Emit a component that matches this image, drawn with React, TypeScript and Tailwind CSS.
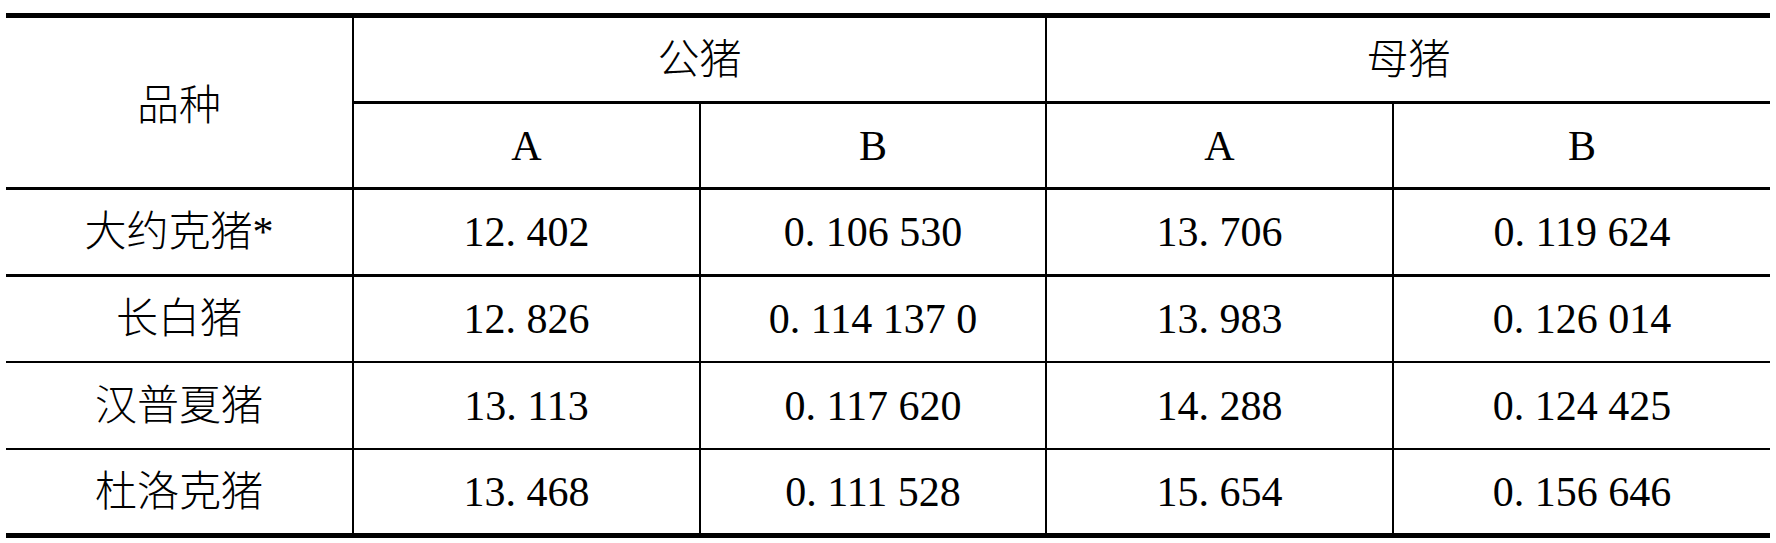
const rows = [
  { name: "大约克猪", star: "*", ma: "12. 402", mb: "0. 106 530", fa: "13. 706", fb: "0. 119 624", line: "border-t-[3px]", h: "h-[87px]" },
  { name: "长白猪", star: "", ma: "12. 826", mb: "0. 114 137 0", fa: "13. 983", fb: "0. 126 014", line: "border-t-[3px]", h: "h-[87px]" },
  { name: "汉普夏猪", star: "", ma: "13. 113", mb: "0. 117 620", fa: "14. 288", fb: "0. 124 425", line: "border-t-[2px]", h: "h-[87px]" },
  { name: "杜洛克猪", star: "", ma: "13. 468", mb: "0. 111 528", fa: "15. 654", fb: "0. 156 646", line: "border-t-[2px]", h: "h-[85px]" },
];

export default function App() {
  return (
    <div
      className="w-[1776px] h-[543px] bg-white text-black text-[42px] leading-none"
      style={{ fontFamily: '"Liberation Serif", "Noto Sans CJK SC", serif' }}
    >
      <div className="pt-[13px] pl-[6px]">
        <div className="w-[1764px] border-t-[5px] border-b-[5px] border-black grid grid-cols-[346px_347px_346px_347px_378px]">
          {/* header */}
          <div className="row-span-2 flex items-center justify-center pt-[6px] font-light">品种</div>
          <div className="col-span-2 h-[83px] border-l-2 border-black flex items-center justify-center font-light">公猪</div>
          <div className="col-span-2 h-[83px] border-l-2 border-black flex items-center justify-center font-light">母猪</div>
          <div className="h-[86px] border-t-[3px] border-l-2 border-black flex items-center justify-center">A</div>
          <div className="h-[86px] border-t-[3px] border-l-2 border-black flex items-center justify-center">B</div>
          <div className="h-[86px] border-t-[3px] border-l-2 border-black flex items-center justify-center">A</div>
          <div className="h-[86px] border-t-[3px] border-l-2 border-black flex items-center justify-center">B</div>

          {/* body */}
          {rows.map((r) => (
            <div key={r.name} className="contents">
              <div className={`${r.h} ${r.line} border-black flex items-center justify-center`}>
                <span className="font-light">{r.name}</span>
                {r.star && <span>{r.star}</span>}
              </div>
              <div className={`${r.h} ${r.line} border-l-2 border-black flex items-center justify-center`}>{r.ma}</div>
              <div className={`${r.h} ${r.line} border-l-2 border-black flex items-center justify-center`}>{r.mb}</div>
              <div className={`${r.h} ${r.line} border-l-2 border-black flex items-center justify-center`}>{r.fa}</div>
              <div className={`${r.h} ${r.line} border-l-2 border-black flex items-center justify-center`}>{r.fb}</div>
            </div>
          ))}
        </div>
      </div>
    </div>
  );
}
